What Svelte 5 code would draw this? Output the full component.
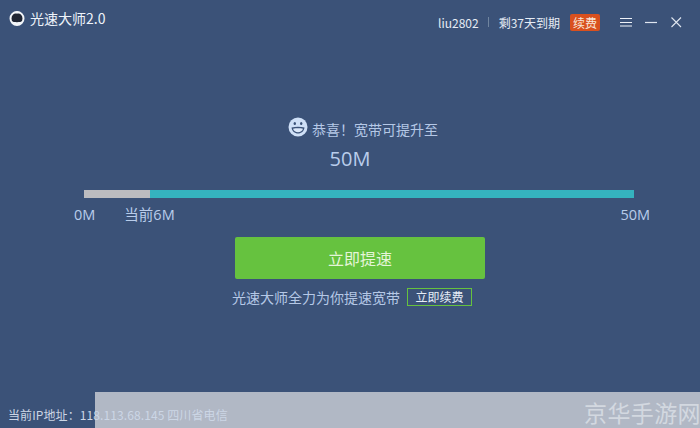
<script>
    const user = "liu2802";
    const current = 6;
    const max = 50;
    const currentPct = (current / max) * 100;
</script>

<style>
    :global(body) {
        margin: 0;
        background: #3b5278;
    }
    .window {
        position: relative;
        width: 700px;
        height: 428px;
        overflow: hidden;
        display: flex;
        flex-direction: column;
        background: #3b5278;
        font-family: "Noto Sans CJK SC", "Liberation Sans", sans-serif;
        color: #dce6f5;
    }
    .titlebar {
        height: 36px;
        display: flex;
        align-items: center;
        padding: 0 17px 0 9px;
    }
    .logo {
        width: 16px;
        height: 16px;
        margin-right: 5px;
    }
    .appname {
        font-size: 14px;
        color: #eef3fa;
        flex: 1;
    }
    .controls {
        display: flex;
        align-items: center;
        padding-top: 8px;
    }
    .user, .expire {
        font-size: 12px;
        color: #e6ecf5;
    }
    .sep {
        width: 1px;
        height: 10px;
        background: #70859f;
        margin: 0 10px 0 9px;
    }
    .renew-tag {
        font-size: 12px;
        line-height: 17px;
        width: 30px;
        text-align: center;
        margin-left: 10px;
        margin-right: 19px;
        background: #d9501e;
        color: #f8e6da;
        border-radius: 2px;
    }
    .winbtn {
        width: 14px;
        height: 14px;
        margin-right: 11px;
        display: block;
    }
    .winbtn:last-child {
        margin-right: 0;
    }
    .content {
        flex: 1;
        display: flex;
        flex-direction: column;
        align-items: center;
        padding: 81px 0 0 18px;
    }
    .congrats {
        display: flex;
        align-items: center;
        height: 24px;
        font-size: 14px;
        color: #b5c8e6;
        margin-left: 8px;
    }
    .smile {
        width: 20px;
        height: 20px;
        margin-right: 4px;
        margin-top: -4px;
    }
    .target {
        font-size: 20px;
        line-height: 26px;
        color: #b9cdeb;
        margin: 5px 0 0 -18px;
        font-family: "Open Sans", sans-serif;
    }
    .bar-wrap {
        width: 550px;
        margin-top: 18px;
    }
    .bar {
        height: 8px;
        background: #35b3bf;
        display: flex;
    }
    .bar-done {
        background: #bcbcc0;
    }
    .scale {
        display: flex;
        font-size: 14.5px;
        line-height: 20px;
        margin: 7px -16px 0 -10px;
        color: #b9cdeb;
        font-family: "Open Sans", "Noto Sans CJK SC", sans-serif;
    }
    .scale .now {
        margin-left: 29px;
        flex: 1;
    }
    .boost {
        width: 250px;
        height: 42px;
        margin: 12px 0 0 2px;
        border: none;
        border-radius: 2px;
        background: #66c23f;
        color: #e4f5d8;
        font-size: 16px;
        font-family: inherit;
        padding: 0;
    }
    .pitch {
        display: flex;
        align-items: center;
        margin: 8px 0 0 -14px;
        font-size: 14px;
        color: #b5c8e6;
    }
    .renew-link {
        font-size: 12px;
        line-height: 16px;
        width: 63px;
        text-align: center;
        margin-left: 7px;
        border: 1px solid #66c23f;
        color: #e6edf6;
        background: none;
        padding: 0;
        font-family: inherit;
        box-sizing: content-box;
    }
    .status {
        position: relative;
        z-index: 1;
        font-size: 12px;
        line-height: 16px;
        padding: 0 0 5px 8px;
        color: #ccd6e5;
        letter-spacing: 0.1px;
        white-space: nowrap;
    }
    .watermark {
        position: absolute;
        left: 95px;
        right: 0;
        bottom: 0;
        height: 36px;
        background: #b1b8c5;
        color: #d3d8e0;
        font-size: 23px;
        line-height: 41px;
        text-align: right;
        letter-spacing: 0.4px;
    }
    .watermark span {
        margin-right: -1px;
    }
</style>

<div class="window">
    <header class="titlebar">
        <svg class="logo" viewBox="0 0 16 16" aria-hidden="true">
            <circle cx="8" cy="8.500" r="6.500" fill="#1f2533" stroke="#f2f5f9" stroke-width="2" />
            <path d="M6.500 1.500h3v2h-3z" fill="#f2f5f9" />
            <path d="M2.500 11c2 1.600 9 1.600 11 0l-1 3-4.500 1-4.500-1z" fill="#f2f5f9" />
        </svg>
        <span class="appname">光速大师2.0</span>
        <div class="controls">
            <span class="user">{user}</span>
            <span class="sep"></span>
            <span class="expire">剩37天到期</span>
            <span class="renew-tag">续费</span>
            <svg class="winbtn" viewBox="0 0 14 14" aria-hidden="true">
                <path d="M1 3.500h12M1 7.500h12M1 11h12" stroke="#eef2f8" stroke-width="1.200" fill="none" />
            </svg>
            <svg class="winbtn" viewBox="0 0 14 14" aria-hidden="true">
                <path d="M1 7.500h12" stroke="#dfe6f0" stroke-width="1.200" fill="none" />
            </svg>
            <svg class="winbtn" viewBox="0 0 14 14" aria-hidden="true">
                <path d="M2.500 2.500l9.500 9.500M12 2.500l-9.500 9.500" stroke="#dfe6f0" stroke-width="1.100" fill="none" />
            </svg>
        </div>
    </header>

    <main class="content">
        <div class="congrats">
            <svg class="smile" viewBox="0 0 20 20" aria-hidden="true">
                <circle cx="10" cy="10" r="9.500" fill="#cfe0f7" />
                <ellipse cx="6.800" cy="6.500" rx="1.200" ry="1.500" fill="#3b5278" />
                <ellipse cx="13.200" cy="6.500" rx="1.200" ry="1.500" fill="#3b5278" />
                <path d="M3.500 10.500c4-.9 9-.9 13 0-.4 3.800-3.200 6-6.500 6s-6.100-2.200-6.500-6z" fill="#3b5278" />
                <path d="M5 11.800c3-.6 7-.6 10 0-.5 2-2.700 3.400-5 3.400s-4.500-1.400-5-3.400z" fill="#dbe8fa" />
            </svg>
            恭喜！宽带可提升至
        </div>
        <div class="target">{max}M</div>

        <div class="bar-wrap">
            <div class="bar">
                <div class="bar-done" style="width: {currentPct}%"></div>
            </div>
            <div class="scale">
                <span>0M</span>
                <span class="now">当前{current}M</span>
                <span>{max}M</span>
            </div>
        </div>

        <button class="boost">立即提速</button>
        <div class="pitch">
            光速大师全力为你提速宽带
            <button class="renew-link">立即续费</button>
        </div>
    </main>

    <div class="watermark"><span>京华手游网</span></div>
    <footer class="status">当前IP地址：118.113.68.145 四川省电信</footer>
</div>
